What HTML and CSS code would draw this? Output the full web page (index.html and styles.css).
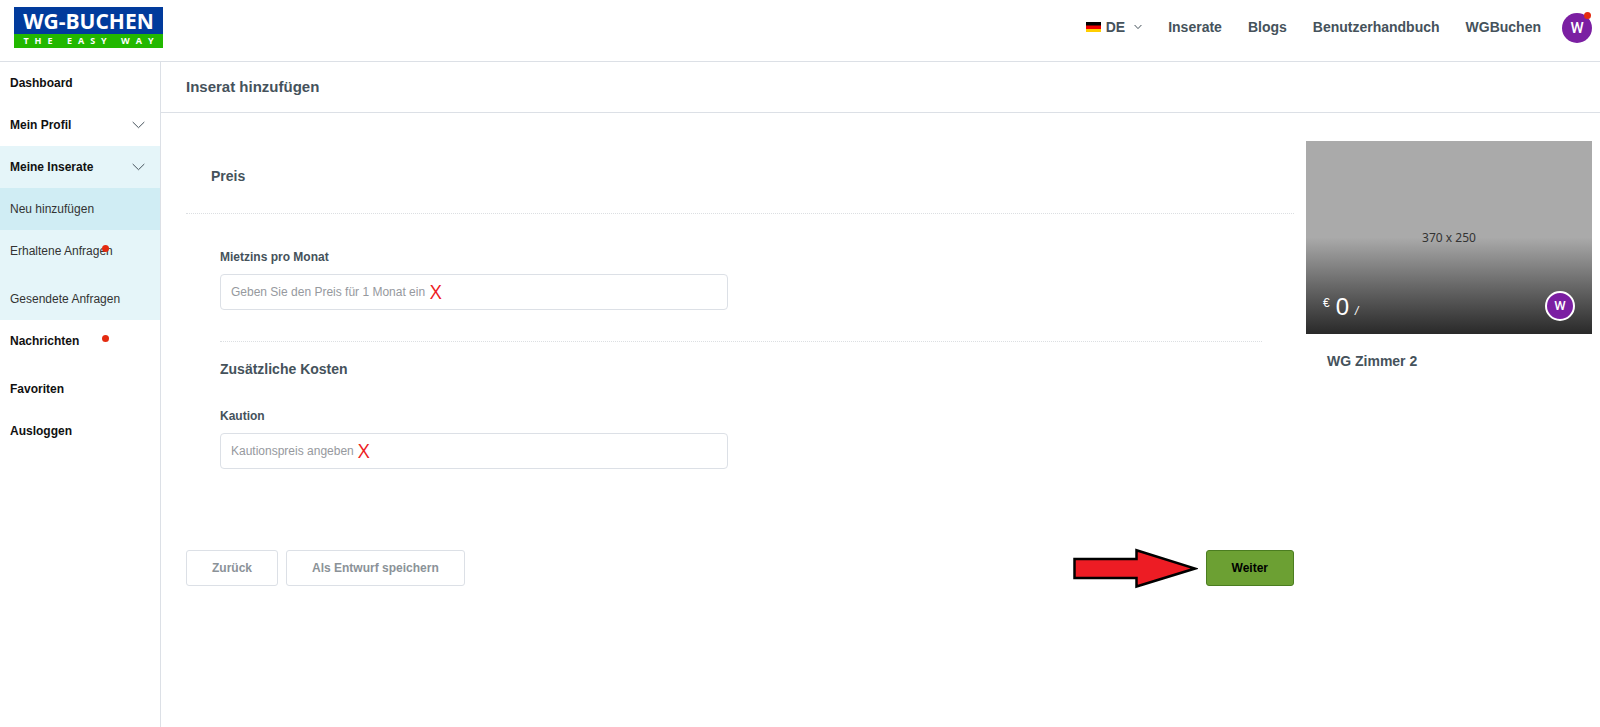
FILE: index.html
```html
<!DOCTYPE html>
<html lang="de">
<head>
<meta charset="utf-8">
<meta name="viewport" content="width=device-width, initial-scale=1">
<title>WG-Buchen – Inserat hinzufügen</title>
<link rel="stylesheet" href="styles.css">
</head>
<body>
<header class="topbar">
  <a class="logo" href="#">
    <span class="logo-name">WG-BUCHEN</span>
    <span class="logo-tagline">THE EASY WAY</span>
  </a>
  <nav class="topnav" aria-label="Hauptnavigation">
    <button class="language" type="button">
      <svg class="flag" viewBox="0 0 15 10" aria-hidden="true"><path fill="#000" d="M0 0h15v4H0z"/><path fill="#e00" d="M0 3.5h15V7H0z"/><path fill="#ffce00" d="M0 7h15v3H0z"/></svg>
      <span>DE</span>
      <svg class="language-arrow" viewBox="0 0 8 6" aria-hidden="true"><path d="M.6 1 4 4.6 7.4 1"/></svg>
    </button>
    <a href="#">Inserate</a>
    <a href="#">Blogs</a>
    <a href="#">Benutzerhandbuch</a>
    <a href="#">WGBuchen</a>
  </nav>
  <a class="account" href="#"><span class="avatar">W</span><span class="dot"></span></a>
</header>
<div class="layout">
  <nav class="sidebar" aria-label="Dashboard">
    <a class="item" href="#">Dashboard</a>
    <button class="item" type="button">Mein Profil
      <svg class="chevron" viewBox="0 0 13 8" aria-hidden="true"><path d="M.7 1 6.5 6.7 12.3 1"/></svg>
    </button>
    <div class="group">
      <button class="item" type="button">Meine Inserate
        <svg class="chevron" viewBox="0 0 13 8" aria-hidden="true"><path d="M.7 1 6.5 6.7 12.3 1"/></svg>
      </button>
      <a class="item sub active" href="#">Neu hinzufügen</a>
      <a class="item sub notify" href="#">Erhaltene Anfragen<span class="dot"></span></a>
      <a class="item sub" href="#">Gesendete Anfragen</a>
    </div>
    <a class="item notify" href="#">Nachrichten<span class="dot"></span></a>
    <a class="item" href="#">Favoriten</a>
    <a class="item" href="#">Ausloggen</a>
  </nav>
  <main class="main">
    <h1 class="page-title">Inserat hinzufügen</h1>
    <div class="columns">
      <form class="form">
        <h2 class="section-title">Preis</h2>
        <div class="fields">
          <div class="field-row">
            <div class="field">
              <label for="rent">Mietzins pro Monat</label>
              <div class="control">
                <input id="rent" type="text" placeholder="Geben Sie den Preis für 1 Monat ein">
                <span class="mark mark-rent">X</span>
              </div>
            </div>
          </div>
          <h3 class="subtitle">Zusätzliche Kosten</h3>
          <div class="field-row">
            <div class="field">
              <label for="deposit">Kaution</label>
              <div class="control">
                <input id="deposit" type="text" placeholder="Kautionspreis angeben">
                <span class="mark mark-deposit">X</span>
              </div>
            </div>
          </div>
        </div>
        <div class="actions">
          <button class="button" type="button">Zurück</button>
          <button class="button" type="button">Als Entwurf speichern</button>
          <svg class="arrow" viewBox="0 0 126 42" aria-hidden="true"><path d="M2.500 12h62V3.200L123 21.500 64.500 39.500V31h-62z"/></svg>
          <button class="button primary" type="submit">Weiter</button>
        </div>
      </form>
      <aside class="preview">
        <div class="photo">
          <span class="photo-size">370 x 250</span>
          <div class="photo-footer">
            <div class="price"><span class="currency">€</span><span class="amount">0</span><span class="period">/</span></div>
            <span class="avatar ringed">W</span>
          </div>
        </div>
        <h2 class="preview-title">WG Zimmer 2</h2>
      </aside>
    </div>
  </main>
</div>
</body>
</html>
```
FILE: styles.css
```css
* { box-sizing: border-box; }

body {
  margin: 0;
  min-height: 100vh;
  display: flex;
  flex-direction: column;
  background: #fff;
  color: #45525b;
  font: 12px/18px "Liberation Sans", Arial, sans-serif;
}

a { color: inherit; text-decoration: none; }
button, input { font: inherit; color: inherit; }
h1, h2, h3 { margin: 0; font-weight: bold; }

/* Top bar */
.topbar {
  display: flex;
  align-items: flex-start;
  height: 62px;
  padding: 7px 8px 0 14px;
  border-bottom: 1px solid #dce0e6;
}

.logo {
  width: 149px;
  color: #fff;
  background: #013b9c;
  text-align: center;
  font-family: "Open Sans", sans-serif;
  font-weight: bold;
}

.logo-name {
  display: block;
  height: 27px;
  font-size: 21px;
  line-height: 28px;
}

.logo-tagline {
  display: block;
  height: 14px;
  padding-left: 6px;
  background: #22b800;
  font-size: 9px;
  line-height: 13px;
  letter-spacing: 6px;
  white-space: nowrap;
}

.topnav {
  display: flex;
  gap: 26px;
  margin: 11px 21px 0 auto;
  font-size: 14px;
  font-weight: bold;
}

.language {
  display: flex;
  align-items: center;
  gap: 5px;
  padding: 0;
  border: 0;
  background: none;
}

.flag { width: 15px; height: 10px; }
.language-arrow { width: 8px; height: 6px; margin-left: 4px; }
.language-arrow path, .chevron path { fill: none; stroke: #45525b; }

.account { position: relative; margin-top: 6px; }

.avatar {
  display: flex;
  align-items: center;
  justify-content: center;
  width: 30px;
  height: 30px;
  border-radius: 50%;
  background: #7b1fa2;
  color: #fff;
  font: 500 15px/30px Roboto, sans-serif;
}

.dot {
  position: absolute;
  width: 7px;
  height: 7px;
  border-radius: 50%;
  background: #e42b10;
}

.account .dot { top: -1px; right: 1px; }

/* Sidebar */
.layout { display: flex; flex: 1; }

.sidebar {
  flex: none;
  width: 161px;
  border-right: 1px solid #dce0e6;
  color: #111;
}

.item {
  position: relative;
  display: flex;
  align-items: center;
  justify-content: space-between;
  width: 100%;
  padding: 12px 15px 12px 10px;
  border: 0;
  background: none;
  font-weight: bold;
  text-align: left;
}

.chevron { width: 13px; height: 8px; }
.group { background: #e5f5f9; }
.sub { color: #333; font-weight: normal; }
.active { background: #d0edf4; }
.notify { padding-bottom: 18px; }
.notify .dot { top: 15px; left: 102px; }

/* Main */
.main { flex: 1; min-width: 0; }

.page-title {
  padding: 14px 25px 15px;
  border-bottom: 1px solid #dce0e6;
  font-size: 15px;
  line-height: 21px;
}

.columns {
  display: grid;
  grid-template-columns: minmax(0, 1fr) 286px;
  gap: 12px;
  padding: 28px 8px 28px 25px;
}

.section-title {
  padding: 26px 25px 27px;
  border-bottom: 1px dotted #dcdfe2;
  font-size: 14px;
  line-height: 19px;
}

.fields { padding: 34px 32px 0 34px; }

.field-row {
  display: grid;
  grid-template-columns: 1fr 1fr;
  gap: 26px;
}

.field label {
  display: block;
  margin-bottom: 8px;
  font-weight: bold;
}

.control { position: relative; }

.control input {
  display: block;
  width: 100%;
  height: 36px;
  padding: 0 10px;
  border: 1px solid #dce0e6;
  border-radius: 4px;
  background: #fff;
}

.control input::placeholder { color: #96999e; opacity: 1; }

.mark {
  position: absolute;
  top: 8px;
  color: #ed1c24;
  font: 20px/20px "Open Sans", sans-serif;
}

.mark-rent { left: 210px; }
.mark-deposit { left: 138px; }

.subtitle {
  margin-top: 31px;
  padding: 18px 0 28px;
  border-top: 1px dotted #dcdfe2;
  font-size: 14px;
  line-height: 19px;
}

.actions {
  display: flex;
  align-items: center;
  gap: 8px;
  margin-top: 81px;
}

.button {
  height: 36px;
  padding: 0 25px;
  border: 1px solid #dce0e6;
  border-radius: 3px;
  background: #fff;
  color: #8b9298;
  font-weight: bold;
}

.primary {
  border-color: #4b7d20;
  background: #6ca033;
  color: #000;
}

.arrow { width: 126px; height: 42px; margin: -3px 0 -3px auto; }
.arrow path { fill: #ed1c24; stroke: #000; stroke-width: 2.5; }

/* Preview card */
.photo {
  position: relative;
  display: flex;
  align-items: flex-end;
  aspect-ratio: 286 / 193;
  background: linear-gradient(#aaa 50%, #686868 75%, #292929);
}

.photo-size {
  position: absolute;
  inset: 0;
  display: flex;
  align-items: center;
  justify-content: center;
  color: #333;
  font: 12px/18px "Noto Sans", sans-serif;
}

.photo-footer {
  position: relative;
  flex: 1;
  display: flex;
  align-items: flex-end;
  justify-content: space-between;
  padding: 0 17px 13px;
}

.price {
  display: flex;
  gap: 6px;
  color: #fff;
  line-height: 20px;
}

.amount { font-size: 24px; line-height: 28px; }
.period { align-self: flex-end; font-style: italic; }

.ringed { border: 2px solid #fff; font-size: 13px; }

.preview-title {
  padding: 18px 21px;
  font-size: 14px;
  line-height: 19px;
}
```
